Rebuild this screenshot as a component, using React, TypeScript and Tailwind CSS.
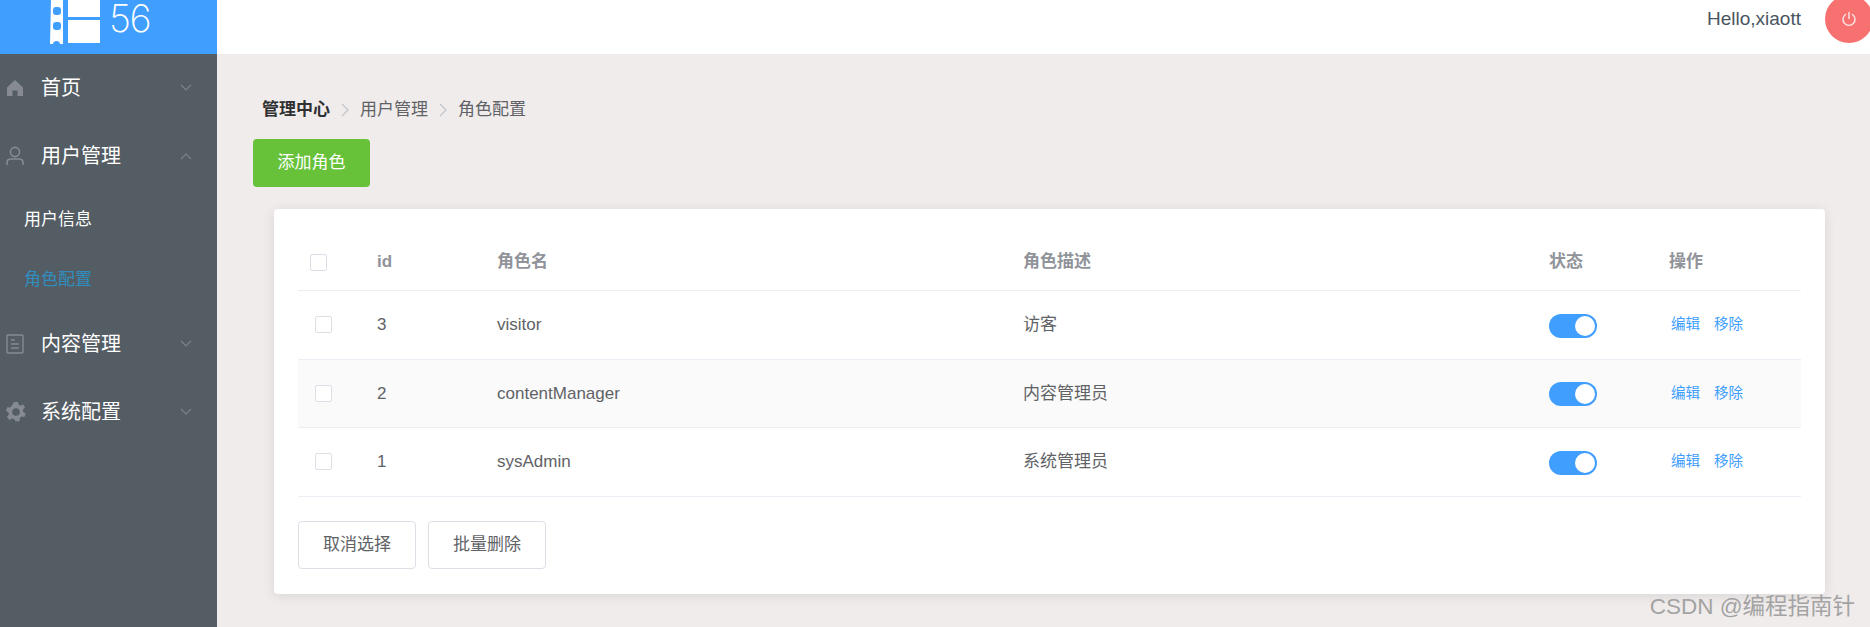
const cjk = "font-['Liberation_Sans','Noto_Sans_CJK_SC',sans-serif]";

const roles = [
  { id: 3, name: "visitor", desc: "访客" },
  { id: 2, name: "contentManager", desc: "内容管理员" },
  { id: 1, name: "sysAdmin", desc: "系统管理员" },
];

const grid = "grid grid-cols-[79px_120px_526px_526px_120px_1fr] items-center border-b border-[#ebeef5]";

function Chevron({ up }: { up?: boolean }) {
  return (
    <svg width="14" height="8" viewBox="0 0 14 8" fill="none" stroke="#7d848b" strokeWidth="1.2" className="ml-auto mr-[24px]">
      <path d={up ? "M2 7 L7 2 L12 7" : "M2 1 L7 6 L12 1"} />
    </svg>
  );
}

function HomeIcon() {
  return (
    <svg width="18" height="18" viewBox="0 0 18 18" fill="#858b91">
      <path d="M9 1 L17 8.5 V17 H11.5 V11.5 H6.5 V17 H1 V8.5 Z" />
    </svg>
  );
}

function UserIcon() {
  return (
    <svg width="18" height="20" viewBox="0 0 18 20" fill="none" stroke="#858b91" strokeWidth="1.6">
      <circle cx="9" cy="6" r="4.6" />
      <path d="M1 19 V16.5 C1 14.2 2.8 13 5 13 H13 C15.2 13 17 14.2 17 16.5 V19" />
    </svg>
  );
}

function DocIcon() {
  return (
    <svg width="18" height="20" viewBox="0 0 18 20" fill="none" stroke="#858b91" strokeWidth="1.4">
      <rect x="1" y="1" width="16" height="18" rx="1" />
      <path d="M5 6 H9 M5 10 H13 M5 14 H13" />
    </svg>
  );
}

function GearIcon() {
  return (
    <svg width="20" height="20" viewBox="0 0 20 20" fill="#858b91">
      <path fillRule="evenodd" d="M8 0 H12 L12.6 2.8 L14.6 3.7 L17 2.2 L19 5.6 L17 7.5 V9.9 L19.8 11.5 L18.3 15 L15.4 14.5 L13.8 16.2 L13.6 19.2 H9.4 L8.2 17 L6 16.5 L3.4 18 L1 14.8 L2.8 12.6 L2.6 10.4 L0 9 L1.2 5.2 L4 5.4 L5.8 3.7 Z M10 6.2 A3.8 3.8 0 1 0 10 13.8 A3.8 3.8 0 1 0 10 6.2 Z" />
    </svg>
  );
}

function MenuItem({ icon, label, up }: { icon: React.ReactNode; label: string; up?: boolean }) {
  return (
    <div className="h-[68px] flex items-center text-[20px] text-white">
      <div className="w-[41px] pl-[6px] flex items-center shrink-0">{icon}</div>
      <span>{label}</span>
      <Chevron up={up} />
    </div>
  );
}

function Sidebar() {
  return (
    <aside className="w-[217px] shrink-0 bg-[#545c64] flex flex-col">
      <div className="h-[54px] bg-[#409eff] flex overflow-hidden text-white">
        <svg width="52" height="44" viewBox="0 0 52 44" fill="#fff" className="ml-[50px] shrink-0">
          <path d="M1 0 H13 V44 H10 C10 40 3 40 3 44 H0 Z" />
          <rect x="3" y="7" width="8" height="8" rx="3" fill="#409eff" />
          <rect x="3" y="22" width="8" height="8" rx="3" fill="#409eff" />
          <rect x="18" y="0" width="32" height="17" />
          <rect x="18" y="20" width="32" height="23" />
        </svg>
        <span className="ml-[7px] text-[38px] font-extralight tracking-[-1.5px] leading-[37px] font-['Inter',sans-serif]">56</span>
      </div>
      <MenuItem icon={<HomeIcon />} label="首页" />
      <MenuItem icon={<UserIcon />} label="用户管理" up />
      <div className="h-[60px] flex items-center pl-[24px] text-[17px] text-white">用户信息</div>
      <div className="h-[60px] flex items-center pl-[24px] text-[17px] text-[#2f8ebf]">角色配置</div>
      <MenuItem icon={<DocIcon />} label="内容管理" />
      <MenuItem icon={<GearIcon />} label="系统配置" />
    </aside>
  );
}

function Checkbox({ className }: { className: string }) {
  return <div className={`w-[17px] h-[17px] border border-[#dcdfe6] rounded-[2px] bg-white ${className}`} />;
}

function Toggle() {
  return (
    <div className="w-[48px] h-[24px] rounded-full bg-[#409eff] flex items-center justify-end pr-[2px] mt-[2px]">
      <div className="w-[20px] h-[20px] rounded-full bg-white" />
    </div>
  );
}

function OutlineButton({ label }: { label: string }) {
  return (
    <button className="w-[118px] h-[48px] border border-[#dcdfe6] rounded-[4px] bg-white text-[17px] text-[#606266]">
      {label}
    </button>
  );
}

function RoleTable() {
  return (
    <div className="text-[17px] text-[#606266]">
      <div className={`${grid} h-[64px] pt-[7px] font-bold text-[#909399]`}>
        <Checkbox className="ml-[12px]" />
        <div>id</div>
        <div>角色名</div>
        <div>角色描述</div>
        <div>状态</div>
        <div>操作</div>
      </div>
      {roles.map((r, i) => (
        <div key={r.id} className={`${grid} h-[68.5px] ${i === 1 ? "bg-[#fafafa]" : ""}`}>
          <Checkbox className="ml-[17px]" />
          <div>{r.id}</div>
          <div>{r.name}</div>
          <div>{r.desc}</div>
          <Toggle />
          <div className="flex gap-[14px] pl-[2px] mt-[1px] text-[14.5px] text-[#409eff]">
            <span>编辑</span>
            <span>移除</span>
          </div>
        </div>
      ))}
    </div>
  );
}

export default function App() {
  return (
    <div className={`relative w-[1870px] h-[627px] flex overflow-hidden bg-[#f0ecec] ${cjk}`}>
      <Sidebar />
      <main className="flex-1 min-w-0 flex flex-col">
        <header className="h-[54px] bg-white flex items-start justify-end overflow-hidden">
          <span className="mt-[8px] text-[19px] leading-[22px] text-[#4a5560]">Hello,xiaott</span>
          <div className="ml-[24px] -mr-[3px] -mt-[5px] w-[48px] h-[48px] rounded-full bg-[#f87171] flex items-center justify-center shrink-0">
            <svg width="16" height="16" viewBox="0 0 16 16" fill="none" stroke="#fde8e8" strokeWidth="1.4" strokeLinecap="round">
              <path d="M8 1.5 V7.5" />
              <path d="M4.5 3.5 A6 6 0 1 0 11.5 3.5" />
            </svg>
          </div>
        </header>
        <div className="mt-[45px] ml-[45px] flex items-center text-[17px] leading-[22px] text-[#606266]">
          <span className="font-bold text-[#303133]">管理中心</span>
          <svg width="10" height="14" viewBox="0 0 10 14" fill="none" stroke="#c0c4cc" strokeWidth="1.2" className="mx-[10px]">
            <path d="M2 1 L8 7 L2 13" />
          </svg>
          <span>用户管理</span>
          <svg width="10" height="14" viewBox="0 0 10 14" fill="none" stroke="#c0c4cc" strokeWidth="1.2" className="mx-[10px]">
            <path d="M2 1 L8 7 L2 13" />
          </svg>
          <span>角色配置</span>
        </div>
        <button className="mt-[18px] ml-[36px] w-[117px] h-[48px] rounded-[4px] bg-[#67c23a] text-[17px] text-white">
          添加角色
        </button>
        <section className="mt-[22px] ml-[57px] w-[1551px] h-[385px] bg-white rounded-[4px] shadow-[0_2px_12px_rgba(0,0,0,0.1)] px-[24px] pt-[18px]">
          <RoleTable />
          <div className="mt-[24px] flex gap-[12px]">
            <OutlineButton label="取消选择" />
            <OutlineButton label="批量删除" />
          </div>
        </section>
      </main>
      <div className="absolute right-[15px] bottom-[6px] text-[22.5px] leading-[28px] text-[#a3a3a3]">CSDN @编程指南针</div>
    </div>
  );
}
